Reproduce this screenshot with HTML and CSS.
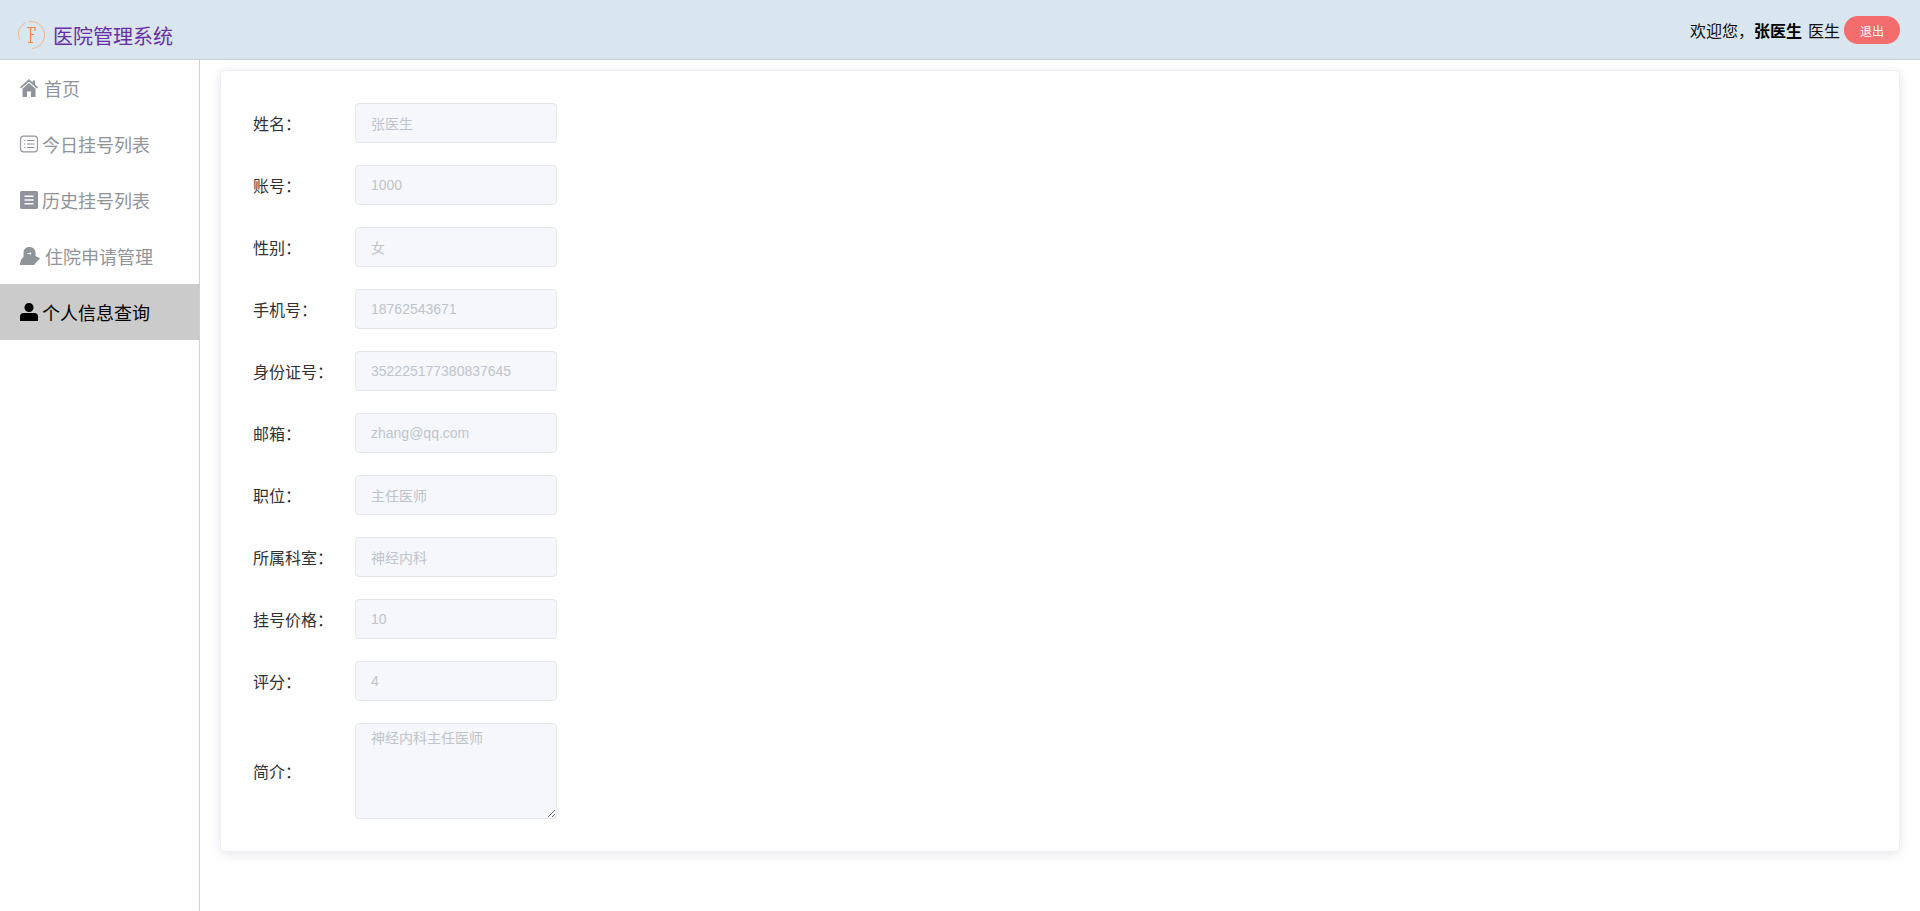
FILE: index.html
```html
<!DOCTYPE html>
<html lang="zh-CN">
<head>
<meta charset="utf-8">
<title>医院管理系统</title>
<link rel="stylesheet" href="styles.css">
</head>
<body>
<header class="topbar">
  <div class="brand">
    <svg class="logo" viewBox="0 0 28 28" width="28" height="28" fill="none">
      <path d="M8 1.500C3.500 3.500 0.500 8 0.500 13C0.500 15.500 1.200 17.500 2 19" stroke="#f7b48a" stroke-width="1"/>
      <path d="M11 0.500C20 -0.500 26.500 6 26.500 14C26.500 21 21 27 14 27.500" stroke="#f6b590" stroke-width="1"/>
      <path d="M9 6.500H17V10M12.500 6.500V21.500M10 21.500H15M12.500 13.500H16" stroke="#f5853f" stroke-width="1.200"/>
    </svg>
    <span class="brand-name">医院管理系统</span>
  </div>
  <div class="user">
    <span>欢迎您，</span><strong class="user-name">张医生</strong><span class="user-role">医生</span>
    <button class="logout">退出</button>
  </div>
</header>
<div class="layout">
  <nav class="sidebar">
    <a class="nav-item item-home">
      <svg class="nav-icon" viewBox="0 0 18 18"><path d="M9 0L0 8.200L1.200 9.500L9 2.500L16.800 9.500L18 8.200L15 5.500V1.500H12.700V3.400Z"/><path d="M9 4L2.500 9.800V18H7V12.500H11V18H15.500V9.800Z"/></svg>
      <span>首页</span>
    </a>
    <a class="nav-item">
      <svg class="nav-icon" viewBox="0 0 18 18" fill="none"><rect x="0.600" y="1.100" width="16.800" height="15.800" rx="3" class="line"/><path d="M4 5.500H5.500M7 5.500H14.500M4 9H5.500M7 9H14.500M4 12.500H5.500M7 12.500H14.500" class="line"/></svg>
      <span>今日挂号列表</span>
    </a>
    <a class="nav-item">
      <svg class="nav-icon" viewBox="0 0 18 18"><path fill-rule="evenodd" d="M1.500 0H16.500A1.500 1.500 0 0 1 18 1.500V16.500A1.500 1.500 0 0 1 16.500 18H1.500A1.500 1.500 0 0 1 0 16.500V1.500A1.500 1.500 0 0 1 1.500 0ZM4.500 4.500V6H13.500V4.500ZM4.500 8.300V9.800H13.500V8.300ZM4.500 12V13.500H13.500V12Z"/></svg>
      <span>历史挂号列表</span>
    </a>
    <a class="nav-item item-wide">
      <svg class="nav-icon wide" viewBox="0 0 20 18"><path d="M9.500 0C13.200 0 15.500 2.500 15.500 6V9L20 11.200L14 18H0C0 14 1.500 11.500 3.500 10V6C3.500 2.500 5.800 0 9.500 0Z"/><path d="M7.500 6.500H11M9.800 5.300L11.200 6.500L9.800 7.700" stroke="#fff" stroke-width="0.800" fill="none"/></svg>
      <span>住院申请管理</span>
    </a>
    <a class="nav-item active">
      <svg class="nav-icon" viewBox="0 0 18 18"><path d="M9 0C11.700 0 13.500 2 13.500 4.500C13.500 7 11.700 9 9 9C6.300 9 4.500 7 4.500 4.500C4.500 2 6.300 0 9 0Z"/><path d="M3.500 10H14.500C16.700 10 18 11.500 18 13.500V18H0V13.500C0 11.500 1.300 10 3.500 10Z"/></svg>
      <span>个人信息查询</span>
    </a>
  </nav>
  <main class="content">
    <section class="card">
      <div class="row"><label class="label">姓名：</label><input class="field" disabled value="张医生"></div>
      <div class="row"><label class="label">账号：</label><input class="field" disabled value="1000"></div>
      <div class="row"><label class="label">性别：</label><input class="field" disabled value="女"></div>
      <div class="row"><label class="label">手机号：</label><input class="field" disabled value="18762543671"></div>
      <div class="row"><label class="label">身份证号：</label><input class="field" disabled value="352225177380837645"></div>
      <div class="row"><label class="label">邮箱：</label><input class="field" disabled value="zhang@qq.com"></div>
      <div class="row"><label class="label">职位：</label><input class="field" disabled value="主任医师"></div>
      <div class="row"><label class="label">所属科室：</label><input class="field" disabled value="神经内科"></div>
      <div class="row"><label class="label">挂号价格：</label><input class="field" disabled value="10"></div>
      <div class="row"><label class="label">评分：</label><input class="field" disabled value="4"></div>
      <div class="row last"><label class="label">简介：</label><textarea class="field area" disabled>神经内科主任医师</textarea></div>
    </section>
  </main>
</div>
</body>
</html>
```
FILE: styles.css
```css
* { box-sizing: border-box; }
html, body { height: 100%; }
body {
  margin: 0;
  font-family: "Liberation Sans", "Noto Sans CJK SC", sans-serif;
  font-size: 14px;
  color: #303133;
  background: #fff;
  overflow: hidden;
}
.topbar {
  height: 60px;
  background: #d9e5ef;
  border-bottom: 1px solid #c9ced6;
  display: flex;
  justify-content: space-between;
  align-items: center;
  padding: 0 20px 0 18px;
}
.brand { display: flex; align-self: flex-start; gap: 7px; padding-top: 21px; }
.logo { display: block; overflow: visible; }
.brand-name { font-size: 20px; color: #6a2ea6; line-height: 28px; margin-top: 2px; }
.user { display: flex; align-items: center; font-size: 16px; color: #111; margin-top: 1px; }
.user-name { font-weight: 700; color: #000; }
.user-role { margin-left: 6px; margin-right: 4px; }
.logout {
  width: 56px;
  height: 28px;
  border: none;
  border-radius: 14px;
  background: #f56c6c;
  color: #fff;
  font: 12px "Liberation Sans", "Noto Sans CJK SC", sans-serif;
  padding: 0;
}
.layout { display: flex; height: 851px; }
.sidebar {
  width: 200px;
  flex: none;
  border-right: 1px solid #cfcfcf;
}
.nav-item {
  height: 56px;
  display: flex;
  align-items: center;
  padding-left: 20px;
  font-size: 18px;
  color: #909399;
  gap: 4px;
}
.item-home { gap: 6px; }
.nav-icon { width: 18px; height: 18px; fill: #909399; flex: none; }
.nav-icon.wide { width: 20px; }
.item-wide { gap: 5px; }
.line { fill: none; stroke: #909399; stroke-width: 1.100; }
.active { background: #cbcbcb; color: #000; }
.active .nav-icon { fill: #000; }
.content { flex: 1; padding: 10px 20px 0 20px; }
.card {
  height: 782px;
  background: #fff;
  border: 1px solid #ebeef5;
  border-radius: 4px;
  box-shadow: 0 2px 12px rgba(0, 0, 0, 0.1);
  padding: 32px 0 0 32px;
}
.row { display: flex; align-items: center; height: 40px; margin-bottom: 22px; }
.row.last { height: 96px; margin-bottom: 0; }
.label { width: 102px; font-size: 16px; color: #303133; }
.field {
  width: 202px;
  height: 40px;
  border: 1px solid #e4e7ed;
  border-radius: 4px;
  background: #f5f7fa;
  color: #c0c4cc;
  font: 14px "Liberation Sans", "Noto Sans CJK SC", sans-serif;
  padding: 0 15px;
  -webkit-text-fill-color: #c0c4cc;
  opacity: 1;
}
.area {
  height: 96px;
  padding: 4px 15px;
  line-height: 21px;
  resize: vertical;
}
```
